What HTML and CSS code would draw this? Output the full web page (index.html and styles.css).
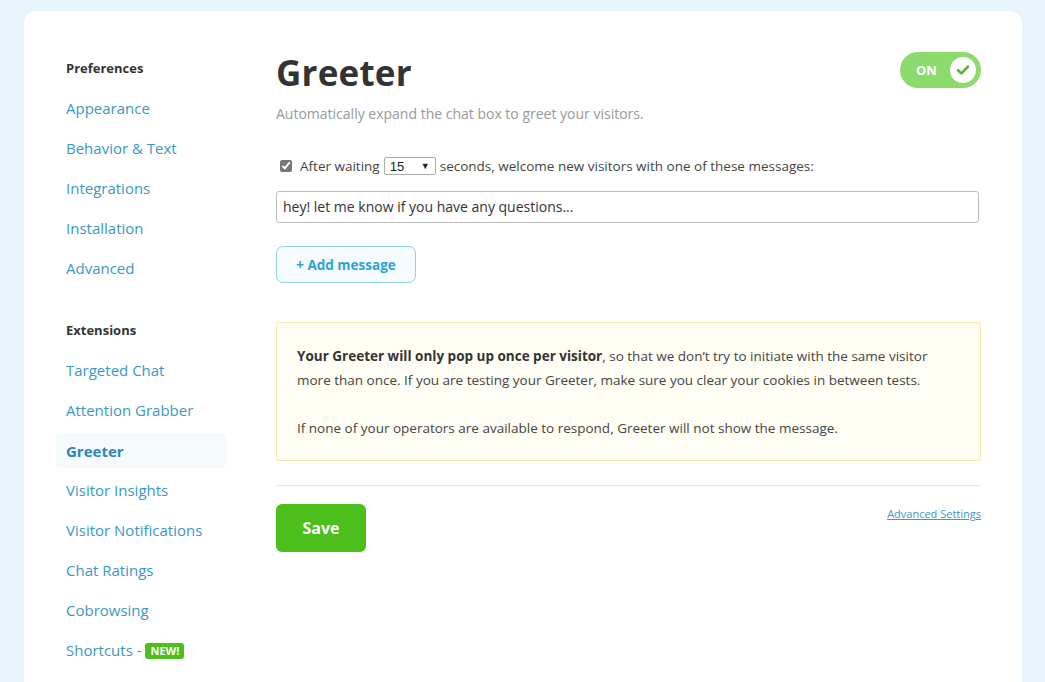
FILE: index.html
```html
<!DOCTYPE html>
<html>
<head>
<meta charset="utf-8">
<link rel="stylesheet" href="styles.css">
</head>
<body>
<div class="card">
  <nav class="sidebar">
    <div class="nav-head">Preferences</div>
    <a class="nav-item">Appearance</a>
    <a class="nav-item">Behavior &amp; Text</a>
    <a class="nav-item">Integrations</a>
    <a class="nav-item">Installation</a>
    <a class="nav-item">Advanced</a>
    <div class="nav-head ext">Extensions</div>
    <a class="nav-item">Targeted Chat</a>
    <a class="nav-item">Attention Grabber</a>
    <a class="nav-item active">Greeter</a>
    <a class="nav-item">Visitor Insights</a>
    <a class="nav-item">Visitor Notifications</a>
    <a class="nav-item">Chat Ratings</a>
    <a class="nav-item">Cobrowsing</a>
    <a class="nav-item">Shortcuts - <span class="badge">NEW!</span></a>
  </nav>
  <main class="main">
    <div class="head">
      <h1 class="title">Greeter</h1>
      <div class="toggle">
        <span class="toggle-label">ON</span>
        <span class="knob">
          <svg width="14" height="12" viewBox="0 0 14 12"><path d="M2 6.2 L5.4 9.4 L12 2.6" fill="none" stroke="#4cb82a" stroke-width="2.6" stroke-linecap="round" stroke-linejoin="round"/></svg>
        </span>
      </div>
    </div>
    <p class="subtitle">Automatically expand the chat box to greet your visitors.</p>
    <div class="wait-row">
      <input type="checkbox" class="check" checked>
      <span>After waiting</span>
      <span class="select"><span>15</span><span class="arrow">▼</span></span>
      <span>seconds, welcome new visitors with one of these messages:</span>
    </div>
    <div class="msg-input">hey! let me know if you have any questions...</div>
    <button class="add-btn">+ Add message</button>
    <div class="notice">
      <p><b>Your Greeter will only pop up once per visitor</b>, so that we don’t try to initiate with the same visitor more than once. If you are testing your Greeter, make sure you clear your cookies in between tests.</p>
      <p>If none of your operators are available to respond, Greeter will not show the message.</p>
    </div>
    <div class="footer">
      <button class="save">Save</button>
      <a class="adv-link">Advanced Settings</a>
    </div>
  </main>
</div>
</body>
</html>
```

FILE: styles.css
```css
html, body {
  margin: 0;
  padding: 0;
}
body {
  background: #e8f4fb;
  font-family: "Open Sans", "Liberation Sans", sans-serif;
  height: 682px;
  overflow: hidden;
}
.card {
  margin: 11px 23px 0 24px;
  background: #fff;
  border-radius: 12px;
  height: 720px;
  display: flex;
  padding: 0 41px 0 32px;
}
.sidebar {
  width: 170px;
  padding-top: 46px;
  display: flex;
  flex-direction: column;
  flex-shrink: 0;
}
.nav-head {
  font-size: 13px;
  font-weight: 700;
  color: #333;
  padding-left: 10px;
  height: 22px;
  line-height: 22px;
}
.nav-head.ext {
  margin-top: 31px;
}
.nav-item {
  font-size: 15px;
  color: #3c97c4;
  padding-left: 10px;
  height: 40px;
  line-height: 40px;
}
.nav-head + .nav-item {
  margin-top: 9px;
}
.nav-item.active {
  background: #f5fafd;
  border-radius: 5px;
  font-weight: 700;
  color: #2e86b4;
  height: 35px;
  line-height: 36px;
  margin: 3px 0 2px;
}
.badge {
  display: inline-block;
  background: #4cbf1c;
  color: #fff;
  font-size: 11px;
  font-weight: 700;
  line-height: 16px;
  padding: 0 5px;
  border-radius: 3px;
  vertical-align: 1px;
}
.main {
  margin-left: 50px;
  flex: 1;
  padding-top: 40px;
}
.head {
  display: flex;
  justify-content: space-between;
  align-items: flex-start;
}
.title {
  margin: 0;
  font-size: 35px;
  font-weight: 700;
  color: #333;
  line-height: 44px;
  letter-spacing: 0.2px;
}
.toggle {
  margin-top: 1px;
  width: 81px;
  height: 36px;
  border-radius: 18px;
  background: #8bdc6c;
  display: flex;
  align-items: center;
  justify-content: space-between;
  padding: 0 5px 0 16px;
  box-sizing: border-box;
}
.toggle-label {
  color: #fff;
  font-weight: 700;
  font-size: 13px;
}
.knob {
  width: 26px;
  height: 26px;
  border-radius: 50%;
  background: #fff;
  display: flex;
  align-items: center;
  justify-content: center;
}
.subtitle {
  margin: 9px 0 0;
  font-size: 14px;
  color: #999;
  line-height: 20px;
}
.wait-row {
  margin-top: 32px;
  display: flex;
  align-items: center;
  font-size: 13.5px;
  color: #444;
  height: 20px;
}
.check {
  margin: 0 8px 0 4px;
  width: 12px;
  height: 12px;
  accent-color: #777;
}
.select {
  display: inline-flex;
  justify-content: space-between;
  align-items: center;
  width: 52px;
  height: 18px;
  box-sizing: border-box;
  border: 1px solid #aaa;
  border-radius: 2px;
  margin: 0 4px;
  padding: 0 5px;
  font-size: 13px;
  color: #222;
  font-family: "Liberation Sans", sans-serif;
}
.arrow {
  font-size: 9px;
}
.msg-input {
  margin-top: 15px;
  width: 703px;
  height: 32px;
  box-sizing: border-box;
  border: 1px solid #bbb;
  border-radius: 3px;
  padding: 0 6px;
  font-size: 14px;
  color: #333;
  line-height: 30px;
}
.add-btn {
  display: block;
  margin-top: 23px;
  width: 140px;
  height: 37px;
  border: 1px solid #8fd3ef;
  background: #f5fbfe;
  border-radius: 7px;
  color: #2ba3d5;
  font-family: inherit;
  font-weight: 700;
  font-size: 13.5px;
  padding: 0;
}
.notice {
  margin-top: 39px;
  background: #fffef5;
  border: 1px solid #f8eaa6;
  border-radius: 3px;
  padding: 21px 20px 20px;
  font-size: 13.5px;
  color: #444;
  line-height: 24px;
}
.notice p {
  margin: 0;
}
.notice p + p {
  margin-top: 24px;
}
.notice b {
  color: #333;
}
.footer {
  margin-top: 24px;
  border-top: 1px solid #e6e6e6;
  padding-top: 18px;
  display: flex;
  justify-content: space-between;
  align-items: flex-start;
}
.save {
  width: 90px;
  height: 48px;
  border: none;
  border-radius: 6px;
  background: #4cbf1c;
  color: #fff;
  font-family: inherit;
  font-weight: 700;
  font-size: 16px;
  padding: 0;
}
.adv-link {
  margin-top: 2px;
  font-size: 11px;
  color: #3c97c4;
  text-decoration: underline;
}
```
